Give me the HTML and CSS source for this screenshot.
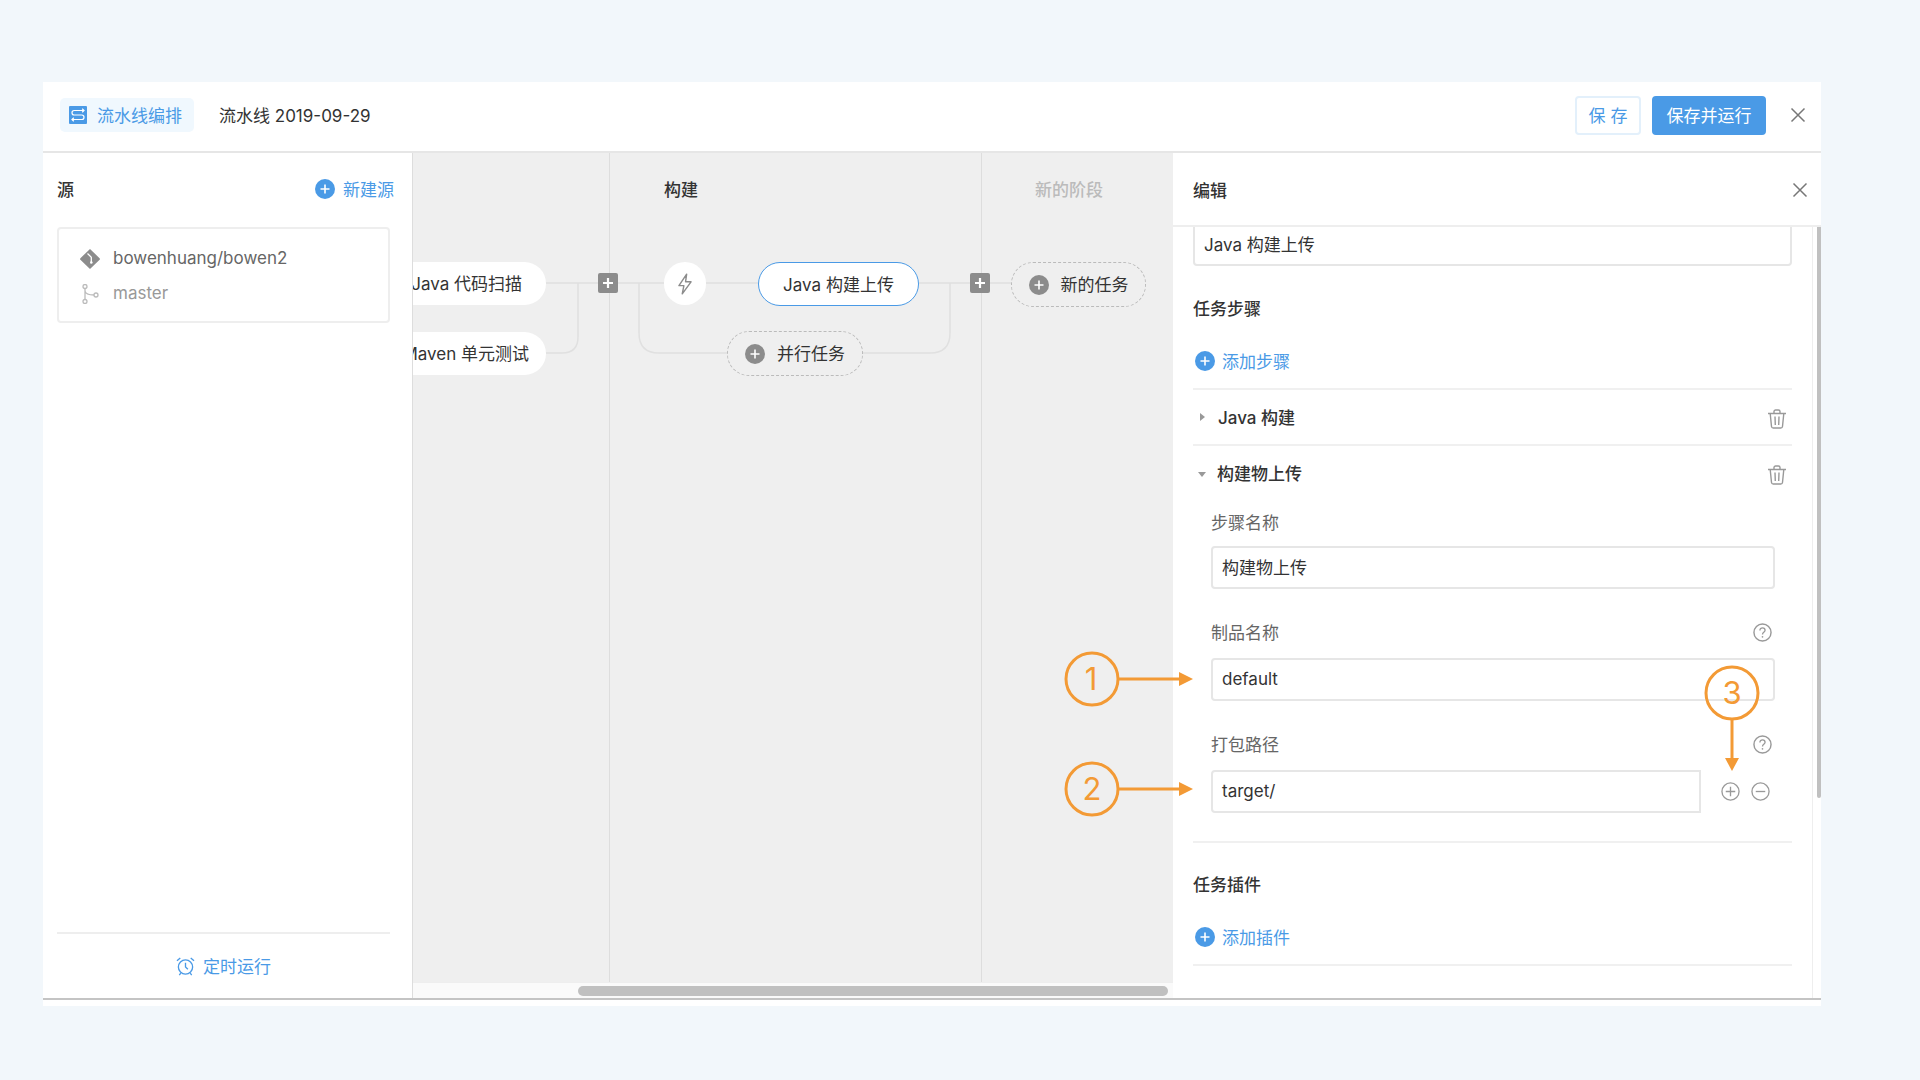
FILE: index.html
```html
<!DOCTYPE html>
<html lang="zh-CN">
<head>
  <meta charset="UTF-8">
  <link rel="stylesheet" href="styles.css">
  <title>流水线编排</title>
</head>
<body>
  <svg class="defs" width="0" height="0">
    <symbol id="i-add" viewBox="0 0 20 20">
      <circle cx="10" cy="10" r="10" fill="currentColor"/>
      <path d="M10 5.500v9M5.500 10h9" stroke="#fff" stroke-width="1.600"/>
    </symbol>
    <symbol id="i-square" viewBox="0 0 20 20">
      <rect width="20" height="20" rx="2" fill="#8c8c8c"/>
      <path d="M10 5v10M5 10h10" stroke="#fff" stroke-width="2.200"/>
    </symbol>
    <symbol id="i-close" viewBox="0 0 16 16">
      <path d="M1.500 1.500l13 13M14.500 1.500l-13 13" stroke="#777" stroke-width="1.500" fill="none"/>
    </symbol>
    <symbol id="i-trash" viewBox="0 0 20 20">
      <path d="M1 4.500h18M7 4.500V2.600C7 1.700 7.700 1 8.600 1h2.800c.9 0 1.600.7 1.600 1.600v1.900M3.200 4.500l1.300 13c.1.9.8 1.500 1.700 1.500h7.600c.9 0 1.600-.6 1.700-1.500l1.300-13M8 7.500l.3 8.500M12 7.500l-.3 8.500" stroke="#999" stroke-width="1.400" fill="none"/>
    </symbol>
    <symbol id="i-help" viewBox="0 0 20 20">
      <circle cx="10" cy="10" r="9" stroke="#999" stroke-width="1.500" fill="none"/>
      <path d="M7.300 7.800c0-1.600 1.200-2.600 2.700-2.600s2.700 1 2.700 2.400c0 2.200-2.700 2.200-2.700 4.400" stroke="#999" stroke-width="1.400" fill="none"/>
      <circle cx="10" cy="14.600" r=".9" fill="#999"/>
    </symbol>
  </svg>

  <div class="window">
    <header class="topbar">
      <div class="tag">
        <svg class="tag-icon" viewBox="0 0 18 18">
          <rect width="18" height="18" rx="1" fill="#4a9ae6"/>
          <path d="M15 4.500H5.200C3.800 4.500 3 5.400 3 6.700S3.800 9 5.200 9h7.600c1.400 0 2.200.9 2.200 2.200s-.8 2.300-2.200 2.300H3M13.200 2.800L15 4.500l-1.800 1.700M4.800 11.800L3 13.500l1.800 1.700" stroke="#fff" stroke-width="1.200" fill="none"/>
        </svg>
        流水线编排
      </div>
      <div class="pipeline-name">流水线 2019-09-29</div>
      <div class="actions">
        <button class="btn">保 存</button>
        <button class="btn btn-primary">保存并运行</button>
        <svg class="close top-close"><use href="#i-close"/></svg>
      </div>
    </header>

    <div class="workspace">
      <aside class="sources">
        <div class="sources-head">
          <span class="title">源</span>
          <span class="link"><svg class="add-icon"><use href="#i-add"/></svg>新建源</span>
        </div>
        <div class="source-card">
          <div class="source-row">
            <svg class="source-icon" viewBox="0 0 20 20">
              <path d="M10 0l9.600 9.200c.5.5.5 1.200 0 1.600L10 20 .4 10.800c-.5-.4-.5-1.100 0-1.600z" fill="#8c8c8c"/>
              <path d="M7.500 4.500l3.800 3.700V13" stroke="#fff" stroke-width="1.300" fill="none"/>
              <circle cx="11.300" cy="13.500" r="1.300" fill="#fff"/>
            </svg>
            bowenhuang/bowen2
          </div>
          <div class="source-row source-branch">
            <svg class="source-icon" viewBox="0 0 20 20">
              <circle cx="5" cy="2.500" r="2" stroke="#bbb" stroke-width="1.300" fill="none"/>
              <circle cx="5" cy="17.500" r="2" stroke="#bbb" stroke-width="1.300" fill="none"/>
              <circle cx="16" cy="11" r="2" stroke="#bbb" stroke-width="1.300" fill="none"/>
              <path d="M5 4.500v11M5 7c.5 3 4 4 9 4" stroke="#bbb" stroke-width="1.300" fill="none"/>
            </svg>
            master
          </div>
        </div>
        <div class="sources-foot">
          <span class="link">
            <svg class="clock-icon" viewBox="0 0 20 20">
              <circle cx="10" cy="11" r="7.500" stroke="#4a9ae6" stroke-width="1.400" fill="none"/>
              <path d="M10 6.500V11l2.500 2.500M1 4.500L4.500 1.500M19 4.500L15.500 1.500M5 17.500L3.500 19.500M15 17.500l1.500 2" stroke="#4a9ae6" stroke-width="1.400" fill="none"/>
            </svg>
            定时运行
          </span>
        </div>
      </aside>

      <main class="stages">
        <div class="canvas">
          <div class="stage stage-first"></div>
          <div class="stage stage-build"><span class="title">构建</span></div>
          <div class="stage stage-new"><span class="title">新的阶段</span></div>

          <svg class="wires" width="760" height="829" fill="none" stroke="#e0e0e0" stroke-width="1.500">
            <path d="M133 130H185M165 130V184Q165 200 149 200H133"/>
            <path d="M205 130H251M293 130H345M226 130V180Q226 200 246 200H314M450 200H517Q537 200 537 180V130"/>
            <path d="M506 130H557M577 130H598"/>
          </svg>

          <div class="node node-scan">Java 代码扫描</div>
          <div class="node node-test">Maven 单元测试</div>
          <svg class="plus plus-a"><use href="#i-square"/></svg>
          <div class="node node-bolt">
            <svg class="bolt" viewBox="0 0 14 20">
              <path d="M8.500 1L1.500 11.500H6L4.500 19 12.500 8H7.500z" stroke="#8c8c8c" stroke-width="1.300" fill="none" stroke-linejoin="round"/>
            </svg>
          </div>
          <div class="node node-active">Java 构建上传</div>
          <svg class="plus plus-b"><use href="#i-square"/></svg>
          <div class="node node-dashed node-parallel"><svg class="add-icon add-gray"><use href="#i-add"/></svg>并行任务</div>
          <div class="node node-dashed node-task"><svg class="add-icon add-gray"><use href="#i-add"/></svg>新的任务</div>
        </div>
        <div class="hscroll"><div class="hscroll-thumb"></div></div>
      </main>

      <section class="editor">
        <div class="editor-head">
          <span class="title">编辑</span>
          <svg class="close"><use href="#i-close"/></svg>
        </div>
        <div class="editor-main">
          <div class="editor-body">
            <div class="input input-first">Java 构建上传</div>
            <div class="title section-title">任务步骤</div>
            <div class="link add-row"><svg class="add-icon"><use href="#i-add"/></svg>添加步骤</div>

            <div class="step">
              <span class="caret caret-right"></span>
              <span class="step-name">Java 构建</span>
              <svg class="trash"><use href="#i-trash"/></svg>
            </div>
            <div class="step">
              <span class="caret caret-down"></span>
              <span class="step-name">构建物上传</span>
              <svg class="trash"><use href="#i-trash"/></svg>
            </div>

            <div class="step-form">
              <div class="field">
                <div class="field-label">步骤名称</div>
                <div class="input">构建物上传</div>
              </div>
              <div class="field">
                <div class="field-label">制品名称<svg class="help"><use href="#i-help"/></svg></div>
                <div class="input">default</div>
              </div>
              <div class="field">
                <div class="field-label">打包路径<svg class="help"><use href="#i-help"/></svg></div>
                <div class="field-row">
                  <div class="input input-short">target/</div>
                  <svg class="round-btn" viewBox="0 0 20 20">
                    <circle cx="10" cy="10" r="9" stroke="#999" stroke-width="1.400" fill="none"/>
                    <path d="M10 5v10M5 10h10" stroke="#999" stroke-width="1.400"/>
                  </svg>
                  <svg class="round-btn" viewBox="0 0 20 20">
                    <circle cx="10" cy="10" r="9" stroke="#999" stroke-width="1.400" fill="none"/>
                    <path d="M5 10h10" stroke="#999" stroke-width="1.400"/>
                  </svg>
                </div>
              </div>
            </div>

            <div class="divider"></div>
            <div class="title section-title">任务插件</div>
            <div class="link add-row"><svg class="add-icon"><use href="#i-add"/></svg>添加插件</div>
            <div class="divider divider-last"></div>
          </div>
          <div class="vscroll"><div class="vscroll-thumb"></div></div>
        </div>
      </section>
    </div>
  </div>

  <!-- orange callouts drawn over the screenshot -->
  <svg class="callouts" width="1920" height="1080" fill="none" stroke="#f39a35" stroke-width="3">
    <circle cx="1092" cy="679" r="26"/>
    <path d="M1118 679H1180"/>
    <path d="M1179 672l14 7-14 7z" fill="#f39a35" stroke="none"/>
    <text x="1091" y="690" class="callout-num">1</text>

    <circle cx="1092" cy="789" r="26"/>
    <path d="M1118 789H1180"/>
    <path d="M1179 782l14 7-14 7z" fill="#f39a35" stroke="none"/>
    <text x="1092" y="800" class="callout-num">2</text>

    <circle cx="1732" cy="693" r="26"/>
    <path d="M1732 719V759"/>
    <path d="M1725 758l7 13 7-13z" fill="#f39a35" stroke="none"/>
    <text x="1732" y="704" class="callout-num">3</text>
  </svg>
</body>
</html>
```

FILE: styles.css
```css
body {
  margin: 0;
  height: 1080px;
  overflow: hidden;
  position: relative;
  background-color: #f2f7fb;
  font-family: Inter, "Noto Sans CJK SC", sans-serif;
  font-size: 17px;
  color: #333;
}

.defs {
  position: absolute;
}

.window {
  margin: 82px 0 0 43px;
  width: 1778px;
  height: 924px;
  background-color: #fff;
}

.title {
  font-weight: 500;
  color: #333;
}

.link {
  display: inline-flex;
  align-items: center;
  color: #4a9ae6;
}

.add-icon {
  width: 20px;
  height: 20px;
  margin: 0 7px -2px 0;
  color: #4a9ae6;
  flex-shrink: 0;
}

.add-gray {
  color: #8c8c8c;
  margin-right: 12px;
}

.close {
  width: 16px;
  height: 16px;
}

/* top bar */
.topbar {
  height: 69px;
  box-sizing: content-box;
  border-bottom: 2px solid #e6e6e6;
  display: flex;
  align-items: center;
  padding: 0 15px 0 17px;
}

.tag {
  width: 134px;
  height: 34px;
  box-sizing: border-box;
  padding: 0 0 2px 9px;
  background-color: #f0f8fe;
  border-radius: 5px;
  display: flex;
  align-items: center;
  color: #4a9ae6;
  margin-bottom: 3px;
}

.tag-icon {
  width: 18px;
  height: 18px;
  margin: 0 10px -2px 0;
}

.pipeline-name {
  margin: 0 0 5px 25px;
}

.actions {
  margin: 0 0 3px auto;
  display: flex;
  align-items: center;
}

.btn {
  height: 39px;
  width: 66px;
  border: 2px solid #e3f0fb;
  border-radius: 4px;
  background-color: #fff;
  color: #4a9ae6;
  font: inherit;
  padding: 0 0 2px;
  margin-right: 11px;
}

.btn-primary {
  width: 114px;
  background-color: #4a9ae6;
  border-color: #4a9ae6;
  color: #fff;
  margin-right: 24px;
}

/* three columns */
.workspace {
  height: 845px;
  border-bottom: 2px solid #c4c4c4;
  display: flex;
}

.sources {
  width: 369px;
  box-sizing: content-box;
  border-right: 1px solid #ddd;
  display: flex;
  flex-direction: column;
}

.sources-head {
  height: 73px;
  margin: 0 18px 0 14px;
  box-sizing: border-box;
  padding-bottom: 2px;
  display: flex;
  align-items: center;
  justify-content: space-between;
}

.sources-head .add-icon {
  margin: 0 8px 0 0;
}

.source-card {
  margin: 1px 22px 0 14px;
  height: 96px;
  box-sizing: border-box;
  border: 2px solid #eee;
  border-radius: 4px;
  padding: 12px 0 0 22px;
}

.source-row {
  height: 35px;
  box-sizing: border-box;
  padding-bottom: 2px;
  display: flex;
  align-items: center;
  color: #666;
}

.source-branch {
  color: #999;
}

.source-icon {
  width: 20px;
  height: 20px;
  margin: 0 13px -2px -1px;
}

.sources-foot {
  margin: auto 22px 0 14px;
  height: 66px;
  box-sizing: border-box;
  border-top: 2px solid #eee;
  display: flex;
  align-items: center;
  justify-content: center;
}

.sources-foot .link {
  padding-bottom: 2px;
}

.clock-icon {
  width: 19px;
  height: 20px;
  margin: 0 8px -2px 0;
}

/* pipeline canvas */
.stages {
  width: 760px;
  display: flex;
  flex-direction: column;
}

.canvas {
  position: relative;
  height: 829px;
  overflow: hidden;
  background-color: #efefef;
  display: flex;
  flex-shrink: 0;
}

.stage {
  box-sizing: border-box;
  padding-top: 25px;
  line-height: 24px;
  border-right: 1px solid #ddd;
}

.stage-first {
  width: 197px;
}

.stage-build {
  width: 372px;
  padding-left: 54px;
}

.stage-new {
  flex: 1;
  padding-left: 53px;
  border-right: 0;
}

.stage-new .title {
  color: #bbb;
}

.wires {
  position: absolute;
  left: 0;
  top: 0;
}

.node {
  position: absolute;
  top: 109px;
  height: 43px;
  box-sizing: border-box;
  padding-bottom: 2px;
  background-color: #fff;
  border-radius: 22px;
  display: flex;
  align-items: center;
  justify-content: center;
  white-space: nowrap;
}

.node-scan {
  left: -60px;
  width: 193px;
  justify-content: flex-end;
  padding-right: 24px;
}

.node-test {
  top: 179px;
  left: -60px;
  width: 193px;
  justify-content: flex-end;
  padding-right: 17px;
}

.node-bolt {
  left: 251px;
  width: 42px;
  padding-bottom: 0;
}

.bolt {
  width: 16px;
  height: 22px;
}

.node-active {
  left: 345px;
  width: 161px;
  height: 44px;
  border: 1.5px solid #4a9ae6;
}

.node-dashed {
  background-color: transparent;
  border: 1.5px dashed #bbb;
  height: 45px;
}

.node-parallel {
  left: 314px;
  top: 178px;
  width: 136px;
}

.node-task {
  left: 598px;
  width: 135px;
}

.plus {
  position: absolute;
  width: 20px;
  height: 20px;
  top: 120px;
}

.plus-a {
  left: 185px;
}

.plus-b {
  left: 557px;
}

.hscroll {
  height: 16px;
  background-color: #fafafa;
  border-top: 1px solid #eee;
  box-sizing: border-box;
  padding: 3px 0 0 165px;
}

.hscroll-thumb {
  width: 590px;
  height: 10px;
  border-radius: 5px;
  background-color: #c0c0c0;
}

/* edit panel */
.editor {
  width: 648px;
  display: flex;
  flex-direction: column;
}

.editor-head {
  height: 74px;
  box-sizing: border-box;
  flex-shrink: 0;
  border-bottom: 2px solid #eee;
  padding: 1px 13px 0 20px;
  display: flex;
  align-items: center;
  justify-content: space-between;
  position: relative;
  background-color: #fff;
  z-index: 1;
}

.editor-main {
  flex: 1;
  display: flex;
  overflow: hidden;
}

.editor-body {
  width: 639px;
  box-sizing: border-box;
  padding: 0 20px;
}

.input {
  height: 43px;
  box-sizing: border-box;
  border: 2px solid #e6e6e6;
  border-radius: 4px;
  padding: 0 0 2px 9px;
  display: flex;
  align-items: center;
  background-color: #fff;
}

.input-first {
  margin-top: -4px;
}

.input-short {
  width: 490px;
  flex-shrink: 0;
  margin-right: 20px;
  border-radius: 4px 0 0 4px;
}

.section-title {
  margin-top: 31px;
  line-height: 24px;
}

.add-row {
  display: flex;
  margin-top: 28px;
  height: 24px;
  padding: 0 0 2px 2px;
  box-sizing: border-box;
  margin-bottom: 15px;
}

.step {
  height: 56px;
  box-sizing: border-box;
  border-top: 2px solid #f0f0f0;
  display: flex;
  align-items: center;
}

.caret {
  width: 0;
  height: 0;
  margin: 0 9px 0 7px;
}

.caret-right {
  border-left: 5px solid #999;
  border-top: 4px solid transparent;
  border-bottom: 4px solid transparent;
  margin-right: 13px;
}

.caret-down {
  border-top: 5px solid #999;
  border-left: 4px solid transparent;
  border-right: 4px solid transparent;
  margin: 2px 11px 0 5px;
}

.step-name {
  font-weight: 500;
  margin-bottom: 2px;
}

.trash {
  width: 20px;
  height: 20px;
  margin: 3px 5px 0 auto;
}

.step-form {
  padding: 0 17px 0 18px;
}

.field {
  margin-top: 32px;
}

.field:first-child {
  margin-top: 11px;
}

.field-label {
  height: 24px;
  box-sizing: border-box;
  padding-bottom: 3px;
  margin-bottom: 13px;
  display: flex;
  align-items: center;
  justify-content: space-between;
  color: #666;
}

.field:first-child .field-label {
  margin-bottom: 11px;
}

.help {
  width: 19px;
  height: 19px;
  margin: 0 3px -2px 0;
}

.field-row {
  display: flex;
  align-items: center;
}

.round-btn {
  width: 19px;
  height: 19px;
  margin-right: 11px;
  flex-shrink: 0;
}

.divider {
  margin-top: 28px;
  border-top: 2px solid #f0f0f0;
}

.divider + .section-title {
  margin-top: 30px;
}

.add-row + .divider {
  margin-top: 0;
}

.vscroll {
  width: 9px;
  box-sizing: border-box;
  border-left: 1px solid #eee;
  padding-left: 4px;
}

.vscroll-thumb {
  width: 4px;
  height: 571px;
  background-color: #c0c0c0;
  border-radius: 0 0 2px 2px;
}

/* callouts */
.callouts {
  position: absolute;
  left: 0;
  top: 0;
}

.callout-num {
  font-size: 31px;
  fill: #f39a35;
  stroke: none;
  text-anchor: middle;
}
```
